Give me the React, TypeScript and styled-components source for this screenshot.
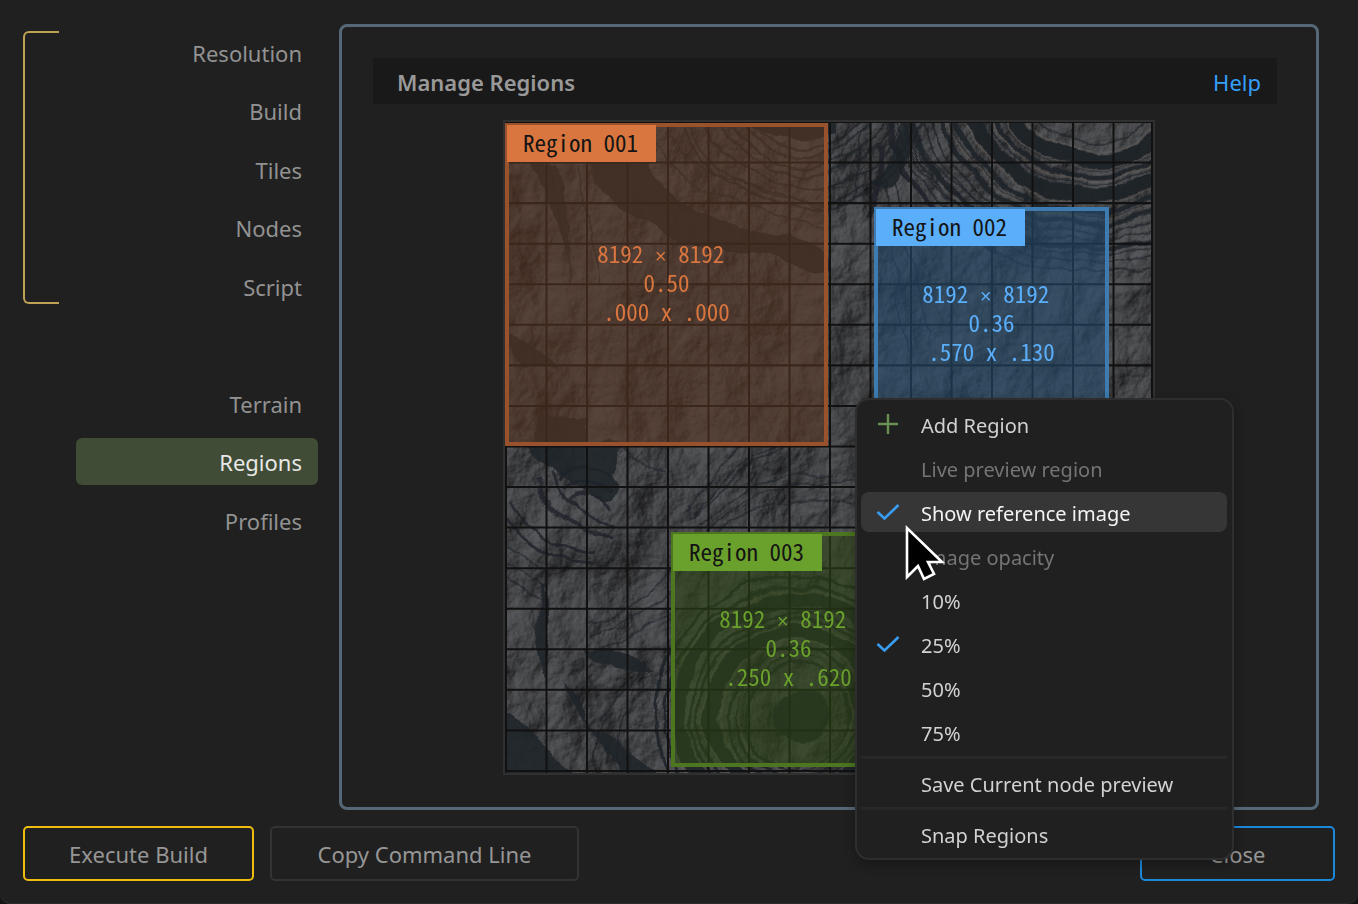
import React from "react";
import styled, { createGlobalStyle } from "styled-components";

const GlobalStyle = createGlobalStyle`
  *, *::before, *::after { box-sizing: border-box; }
  html, body { margin: 0; background: #151515; }
  body { font-family: "Noto Sans", "Open Sans", sans-serif; font-size: 22px; color: #969696; }
  button { font: inherit; color: inherit; cursor: pointer; }
`;

const Window = styled.div`
  display: flex;
  flex-direction: column;
  gap: 16px;
  min-height: 100vh;
  padding: 24px 23px 23px;
  background: #202020;
  border-bottom-left-radius: 10px;
  border-bottom-right-radius: 10px;
  box-shadow: inset 0 -1px 0 #2c2c2c;
`;

const Body = styled.div`
  display: flex;
  flex: 1;
  gap: 21px;
  padding-right: 16px;
`;

const Sidebar = styled.aside`
  display: flex;
  flex: none;
  width: 295px;
  justify-content: space-between;
  align-items: flex-start;
`;

const Bracket = styled.div`
  width: 36px;
  height: 273px;
  margin-top: 7px;
  border: 2px solid #bfa256;
  border-right: 0;
  border-radius: 6px 0 0 6px;
`;

const Nav = styled.nav`
  display: flex;
  flex-direction: column;
  justify-content: space-between;
  width: 242px;
  height: 515px;
  margin-top: 4px;
`;

const NavButton = styled.button<{ $active?: boolean }>`
  height: 47px;
  padding: 2px 16px 0;
  border: 0;
  border-radius: 6px;
  text-align: right;
  line-height: 30px;
  background: ${(p) => (p.$active ? "#404c35" : "transparent")};
  color: ${(p) => (p.$active ? "#e8e8e8" : "#929292")};
`;

const NavSpacer = styled.div`
  height: 47px;
`;

const Panel = styled.main`
  flex: 1;
  display: flex;
  flex-direction: column;
  align-items: center;
  gap: 16px;
  padding: 31px 39px 32px 31px;
  border: 3px solid #566878;
  border-radius: 8px;
`;

const PanelHeader = styled.header`
  display: flex;
  justify-content: space-between;
  align-items: center;
  align-self: stretch;
  height: 46px;
  padding: 2px 16px 0 24px;
  background: #191919;
`;

const Title = styled.h1`
  margin: 0;
  font-size: 22px;
  font-weight: 600;
  line-height: 30px;
  color: #999999;
`;

const HelpLink = styled.a`
  color: #349ffb;
  text-decoration: none;
  line-height: 30px;
`;

const MapFrame = styled.div`
  position: relative;
  width: 652px;
  height: 655px;
  margin-left: 8px;
  border: 2px solid #303030;
`;

const TerrainSvg = styled.svg`
  display: block;
  width: 100%;
  height: 100%;
`;

const RegionBox = styled.section<{
  $x: number; $y: number; $size: number; $edge: string; $fill: string; $ink: string;
}>`
  position: absolute;
  left: ${(p) => p.$x}px;
  top: ${(p) => p.$y}px;
  width: ${(p) => p.$size}px;
  height: ${(p) => p.$size}px;
  display: flex;
  align-items: center;
  justify-content: center;
  padding-bottom: 4px;
  border: 4px solid ${(p) => p.$edge};
  background: ${(p) => p.$fill};
  background-clip: padding-box;
  color: ${(p) => p.$ink};
  font-family: "Noto Sans Mono CJK JP", "Noto Sans Mono CJK SC", "DejaVu Sans Mono", monospace;
  font-size: 23px;
`;

const RegionName = styled.h2<{ $bg: string }>`
  position: absolute;
  left: -2px;
  top: -2px;
  width: 149px;
  height: 37px;
  margin: 0;
  padding-left: 16px;
  background: ${(p) => p.$bg};
  color: #141414;
  font-size: 23px;
  font-weight: 400;
  line-height: 34px;
`;

const RegionInfo = styled.div`
  display: flex;
  flex-direction: column;
  align-items: center;
`;

const InfoLine = styled.div`
  height: 29px;
  line-height: 29px;
  white-space: pre;
`;

const Times = styled.span`
  font-family: "Liberation Mono", monospace;
  font-size: 20px;
  line-height: 20px;
`;

const Menu = styled.div`
  position: absolute;
  z-index: 2;
  left: 350px;
  top: 276px;
  width: 379px;
  padding: 4px 5px 4px 4px;
  border: 2px solid #2e2e2e;
  border-radius: 14px;
  background: #202020;
  box-shadow: 0 4px 12px rgba(0, 0, 0, 0.3);
`;

const MenuItem = styled.button<{ $hot?: boolean }>`
  display: flex;
  align-items: center;
  width: 100%;
  height: 40px;
  margin-bottom: 4px;
  padding: 0 13px;
  gap: 19px;
  border: 0;
  border-radius: 8px;
  background: ${(p) => (p.$hot ? "#363636" : "transparent")};
  color: ${(p) => (p.$hot ? "#f4f4f4" : "#d2d2d2")};
  font-size: 20px;
  line-height: 28px;
  text-align: left;
  &:disabled { color: #747474; }
  &:last-of-type { margin-bottom: 0; }
`;

const MenuLabel = styled.span`
  padding-top: 3px;
`;

const IconSlot = styled.span`
  display: flex;
  justify-content: center;
  width: 28px;
`;

const MenuRule = styled.hr`
  height: 3px;
  margin: 3px 0 4px;
  border: 0;
  background: #282828;
`;

const Cursor = styled.svg`
  position: absolute;
  left: 47px;
  top: 123px;
  width: 44px;
  height: 60px;
  pointer-events: none;
`;

const Footer = styled.footer`
  display: flex;
  gap: 16px;
`;

const ActionButton = styled.button<{ $edge: string; $width: number; $end?: boolean }>`
  width: ${(p) => p.$width}px;
  height: 55px;
  margin-left: ${(p) => (p.$end ? "auto" : "0")};
  padding: 0;
  border: 2px solid ${(p) => p.$edge};
  border-radius: 5px;
  background: transparent;
  line-height: 30px;
`;

const CheckIcon = () => (
  <svg width="24" height="18" viewBox="0 0 24 18" fill="none" stroke="#389df0" strokeWidth="2.6" aria-hidden="true">
    <path d="M1.5 9 L8.5 15.5 L22.5 2" />
  </svg>
);

const PlusIcon = () => (
  <svg width="22" height="22" viewBox="0 0 22 22" fill="none" stroke="#6a9153" strokeWidth="2.4" aria-hidden="true">
    <path d="M1 11 H21 M11 1 V21" />
  </svg>
);

const CELL = 40.5;
const columns = Array.from({ length: 17 }, (_, i) => Math.min(647, 1 + i * CELL));
const rows = Array.from({ length: 17 }, (_, i) => i * CELL);
const ring = (cx: number, cy: number, radii: number[], squash: number) =>
  radii.map((r) => <ellipse key={`${cx}-${r}`} cx={cx} cy={cy} rx={r} ry={r * squash} />);

const Terrain = () => (
  <TerrainSvg viewBox="0 0 648 650" preserveAspectRatio="none" role="img" aria-label="Terrain reference">
    <defs>
      <filter id="rock" x="0" y="0" width="100%" height="100%" colorInterpolationFilters="sRGB">
        <feTurbulence type="fractalNoise" baseFrequency="0.01 0.009" numOctaves="6" seed="31" />
        <feColorMatrix values="0 0 0 0 0  0 0 0 0 0  0 0 0 0 0  1 0 0 0 0" />
        <feDiffuseLighting surfaceScale="17" diffuseConstant="1.05" lightingColor="#57585b">
          <feDistantLight azimuth="215" elevation="48" />
        </feDiffuseLighting>
      </filter>
      <filter id="warp" x="0" y="0" width="648" height="650" filterUnits="userSpaceOnUse">
        <feTurbulence type="fractalNoise" baseFrequency="0.018" numOctaves="5" seed="4" result="n" />
        <feDisplacementMap in="SourceGraphic" in2="n" scale="18" xChannelSelector="R" yChannelSelector="G" result="d" />
        <feGaussianBlur in="d" stdDeviation="0.6" />
      </filter>
    </defs>
    <rect width="648" height="650" fill="#434446" />
    <rect width="648" height="650" filter="url(#rock)" opacity="0.85" />
    <g filter="url(#warp)">
      <g fill="#20242b" opacity="0.88">
        <path d="M84 40 L140 42 C150 70 190 90 250 108 C270 112 330 116 324 150 C290 150 280 130 240 128 C200 130 160 116 140 100 C110 86 100 70 92 60 Z" />
        <path d="M24 40 L52 42 C60 60 66 100 64 130 C50 100 40 70 24 40 Z" />
        <path d="M236 0 H330 V14 C300 22 260 20 236 0 Z" />
        <path d="M40 290 L82 294 V324 H26 C24 310 30 300 40 290 Z" />
        <path d="M22 322 H124 C108 330 112 340 104 352 C116 370 108 390 80 374 C60 362 50 350 40 344 C26 340 20 334 22 322 Z" />
        <path d="M0 590 C20 600 60 640 80 660 L0 660 Z" />
        <path d="M60 560 C70 566 86 580 84 610 C110 600 130 640 160 660 L130 660 C110 630 80 610 60 560 Z" />
        <path d="M366 60 C390 84 406 50 412 0 L398 0 C390 30 380 44 366 60 Z" />
        <path d="M0 208 C20 220 36 244 50 250 L10 250 Z" />
        <path d="M36 460 L42 500 L40 560 L34 540 L28 500 Z" />
        <path d="M80 522 C100 530 120 520 150 550 C130 552 100 548 80 522 Z" />
      </g>
      <g fill="none" stroke="#1f232a">
        <g strokeWidth="15" opacity="0.95">{ring(590, -44, [92, 130], 0.9)}</g>
        <g strokeWidth="5" opacity="0.9">{ring(590, -44, [110, 148, 162, 190], 0.9)}</g>
        <g strokeWidth="1.5" opacity="0.85">{ring(590, -44, [72, 102, 118, 154, 172, 180, 197, 205, 216], 0.9)}</g>
        <g strokeWidth="2" opacity="0.8">{ring(300, -40, [68, 76, 86, 94, 106, 120, 126], 1)}</g>
        <g strokeWidth="14" opacity="0.9">{ring(290, 592, [116, 82], 1)}</g>
        <g strokeWidth="3" opacity="0.9">{ring(292, 596, [52, 60, 68, 98, 105, 132, 142], 1)}</g>
        <g strokeWidth="3" opacity="0.8">
          <path d="M44 350 C50 376 76 398 110 402" />
          <path d="M30 356 C44 392 76 412 112 412" />
          <path d="M6 380 C24 402 52 424 90 430" />
          <path d="M0 392 C20 416 50 436 84 440" />
          <path d="M52 360 C64 346 96 344 102 354" />
          <path d="M58 368 C74 358 96 360 104 372" />
          <path d="M62 378 C80 370 98 376 104 388" />
        </g>
        <g strokeWidth="6" opacity="0.85">
          <path d="M384 0 C394 50 424 90 486 126" />
          <path d="M376 20 C374 50 372 70 364 96" />
        </g>
        <g strokeWidth="1.5" opacity="0.75">
          <path d="M0 420 C20 430 36 446 44 450" />
          <path d="M0 440 C18 448 30 456 40 466" />
          <path d="M0 456 C14 462 24 474 34 480" />
          <path d="M120 326 C136 336 150 350 160 352" />
          <path d="M398 0 C408 50 444 90 520 122" />
          <path d="M410 0 C420 40 450 76 540 108" />
          <path d="M404 0 C414 46 446 84 530 116" />
          <path d="M380 60 C384 120 392 170 402 230" />
          <path d="M390 60 C398 120 412 160 430 210" />
          <path d="M356 70 C350 60 352 20 362 0" />
          <path d="M190 400 C240 370 270 350 330 350" />
          <path d="M196 408 C250 372 290 358 350 356" />
          <path d="M184 396 C230 350 260 330 290 316" />
          <path d="M188 390 C226 346 250 332 272 320" />
          <path d="M182 388 C214 340 230 330 244 322" />
          <path d="M210 410 C256 384 300 370 350 380" />
          <path d="M80 500 C110 500 150 480 170 440" />
          <path d="M84 512 C114 504 146 490 168 470" />
          <path d="M90 530 C120 514 150 500 170 488" />
          <path d="M94 600 C104 580 120 560 150 540" />
          <path d="M90 640 C92 620 96 600 104 590" />
          <path d="M120 650 C112 630 110 610 118 590" />
          <path d="M44 40 C50 90 62 120 66 160" />
          <path d="M72 44 C80 90 96 120 92 160" />
          <path d="M136 42 C150 60 174 84 200 96" />
          <path d="M150 20 C180 60 230 90 320 104" />
          <path d="M160 10 C200 50 240 72 322 84" />
        </g>
      </g>
      <circle cx="296" cy="594" r="26" fill="#20242b" opacity="0.9" />
      <g fill="none" stroke="#68635d" strokeWidth="2" opacity="0.5">
        {ring(590, -44, [82, 101, 114, 139, 155], 0.9)}
        {ring(290, 592, [57, 73, 90, 125], 1)}
      </g>
    </g>
    <g stroke="#111111" strokeWidth="2">
      {columns.map((p) => <path key={p} d={`M${p} 0 V650`} />)}
      {rows.map((p) => <path key={p} d={`M0 ${p} H648`} />)}
    </g>
  </TerrainSvg>
);

const regions = [
  { name: "Region 001", x: 0, y: 1, size: 323, pos: ".000 x .000", scale: "0.50", edge: "#99522b", fill: "rgba(87,54,35,.6)", ink: "#d9763f" },
  { name: "Region 002", x: 369, y: 85, size: 235, pos: ".570 x .130", scale: "0.36", edge: "#3d7bb0", fill: "rgba(38,75,108,.6)", ink: "#5aaefa" },
  { name: "Region 003", x: 166, y: 410, size: 235, pos: ".250 x .620", scale: "0.36", edge: "#4c761f", fill: "rgba(45,68,22,.6)", ink: "#6aa02c" },
];

type Entry = { label: string; icon?: "plus" | "check"; disabled?: boolean; hot?: boolean; rule?: boolean };
const entries: Entry[] = [
  { label: "Add Region", icon: "plus" },
  { label: "Live preview region", disabled: true },
  { label: "Show reference image", icon: "check", hot: true },
  { label: "Image opacity", disabled: true },
  { label: "10%" },
  { label: "25%", icon: "check" },
  { label: "50%" },
  { label: "75%" },
  { label: "Save Current node preview", rule: true },
  { label: "Snap Regions", rule: true },
];

export default function App() {
  return (
    <>
      <GlobalStyle />
      <Window>
        <Body>
          <Sidebar>
            <Bracket />
            <Nav aria-label="Build sections">
              {["Resolution", "Build", "Tiles", "Nodes", "Script"].map((n) => (
                <NavButton key={n}>{n}</NavButton>
              ))}
              <NavSpacer />
              {["Terrain", "Regions", "Profiles"].map((n) => (
                <NavButton key={n} $active={n === "Regions"}>{n}</NavButton>
              ))}
            </Nav>
          </Sidebar>
          <Panel>
            <PanelHeader>
              <Title>Manage Regions</Title>
              <HelpLink href="#help">Help</HelpLink>
            </PanelHeader>
            <MapFrame>
              <Terrain />
              {regions.map((r) => (
                <RegionBox key={r.name} $x={r.x} $y={r.y} $size={r.size} $edge={r.edge} $fill={r.fill} $ink={r.ink}>
                  <RegionName $bg={r.ink}>{r.name}</RegionName>
                  <RegionInfo>
                    <InfoLine>8192 <Times>×</Times>{" 8192 "}</InfoLine>
                    <InfoLine>{r.scale}</InfoLine>
                    <InfoLine>{r.pos}</InfoLine>
                  </RegionInfo>
                </RegionBox>
              ))}
              <Menu role="menu">
                {entries.map((e) => (
                  <React.Fragment key={e.label}>
                    {e.rule && <MenuRule />}
                    <MenuItem role="menuitem" disabled={e.disabled} $hot={e.hot}>
                      <IconSlot>
                        {e.icon === "plus" && <PlusIcon />}
                        {e.icon === "check" && <CheckIcon />}
                      </IconSlot>
                      <MenuLabel>{e.label}</MenuLabel>
                    </MenuItem>
                  </React.Fragment>
                ))}
                <Cursor viewBox="0 0 44 60" aria-hidden="true">
                  <path d="M3 5 V54 L14 43 L20 56 L30 51 L24 39 H38 Z" fill="#000" stroke="#fff" strokeWidth="2.6" />
                </Cursor>
              </Menu>
            </MapFrame>
          </Panel>
        </Body>
        <Footer>
          <ActionButton $edge="#eebd10" $width={231}>Execute Build</ActionButton>
          <ActionButton $edge="#333333" $width={309}>Copy Command Line</ActionButton>
          <ActionButton $edge="#1c88d8" $width={195} $end>Close</ActionButton>
        </Footer>
      </Window>
    </>
  );
}
